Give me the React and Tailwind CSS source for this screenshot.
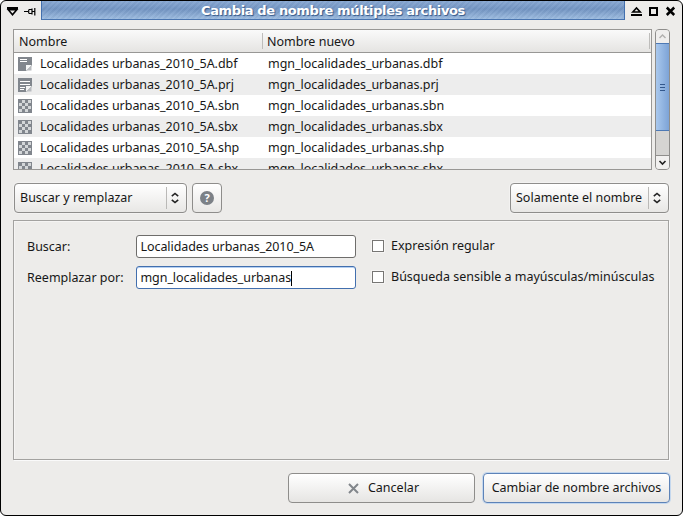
const files = [
  ['dbf', 'doc'],
  ['prj', 'lines'],
  ['sbn', 'bin'],
  ['sbx', 'bin'],
  ['shp', 'bin'],
  ['shx', 'bin'],
];

function FileIcon({ kind }) {
  if (kind === 'bin') {
    const cells = [];
    for (let r = 0; r < 4; r++)
      for (let c = 0; c < 4; c++)
        if ((r + c) % 2 === 1) cells.push(<rect key={r * 4 + c} x={1 + c * 3} y={1 + r * 3} width="3" height="3" fill="#d3d6d8" />);
    return (
      <svg width="14" height="14" shapeRendering="crispEdges" className="shrink-0">
        <rect width="14" height="14" fill="#81868d" />
        {cells}
      </svg>
    );
  }
  return (
    <svg width="14" height="14" className="shrink-0">
      <path d="M0 0H14V8.5L8.5 14H0Z" fill="#81868d" />
      {kind === 'lines' ? (
        <path d="M2 3.5H12M2 6.5H12M2 9.5H7M2 11.5H6" stroke="#fff" />
      ) : (
        <path d="M2 2.5H9M2 4.5H9" stroke="#fff" />
      )}
      <path d="M8 8H14L8 14Z" fill="#f4f5f5" />
      <path d="M13.5 8.5V13.5H8.5Z" fill="#b9bcc0" />
    </svg>
  );
}

function Combo({ label, className }) {
  return (
    <div className={`flex h-[30px] items-center rounded-[4px] border border-[#8e8d8b] bg-linear-to-b from-white to-[#e8e7e5] pl-[5px] shadow-[0_0_0_1px_#f3f2f1] ${className}`}>
      <span className="flex-1">{label}</span>
      <span className="h-[22px] w-px bg-[#bab9b7]" />
      <svg width="19" height="12" className="shrink-0">
        <path d="M4.8 4.2L8 1.5L11.2 4.2M4.8 7.8L8 10.5L11.2 7.8" fill="none" stroke="#222" strokeWidth="1.6" />
      </svg>
    </div>
  );
}

function Check({ label }) {
  return (
    <div className="-mt-px flex h-6 items-center">
      <span className="mr-[7px] size-3 border border-[#777674] bg-white shadow-[0_0_0_1px_#f5f4f3]" />
      <span>{label}</span>
    </div>
  );
}

export default function App() {
  return (
    <div className="h-[516px] w-[683px] overflow-hidden bg-white font-['Noto_Sans',sans-serif] text-[12.5px] leading-[18px] whitespace-nowrap text-[#171717]">
      <div className="flex h-[516px] w-[683px] flex-col rounded-[6px] border border-black bg-[#edecea]">
        <header className="flex h-[19px] shrink-0">
          <svg width="40" height="19" fill="none" stroke="#000">
            <path d="M6 7H17" strokeWidth="2" />
            <path d="M7.3 8.8L11.5 13.7L15.7 8.8Z" strokeWidth="1.6" />
            <path d="M23 10.5H27M27.7 8.5V12.5M28 8.5H31M28 12.5H31M31 7.5V13.5M33.8 7V14.5M31 10.5H34" strokeWidth="1.2" />
          </svg>
          <div className="w-[584px] border-x border-b border-[#426fae] border-b-[#4a75b0] bg-[repeating-linear-gradient(135deg,#ffffff0c_0_2px,#00000006_2px_4px),linear-gradient(#88a8d3,#7294c2_45%,#9dbce0)] pt-px text-center font-['DejaVu_Sans',sans-serif] text-[13px] leading-[18px] font-bold tracking-[-0.37px] text-white [text-shadow:1px_1px_1px_#335788]">
            <span>Cambia de nombre múltiples archivos</span>
          </div>
          <svg width="57" height="19" fill="none" stroke="#000" strokeWidth="2">
            <path d="M6 14H17" />
            <path d="M7.8 11L11.5 7L15.2 11Z" strokeWidth="1.6" />
            <path d="M25 7H32V14H25Z" />
            <path d="M41.8 6.5L49.2 14M49.2 6.5L41.8 14" strokeWidth="2.5" />
          </svg>
        </header>

        <main className="flex flex-col pt-[9px] pl-3">
          <div className="flex h-[141px]">
            <div className="w-[639px] overflow-hidden border border-[#989795] bg-white">
              <div className="flex h-[23px] items-center border-b border-[#989795] bg-linear-to-b from-[#fafafa] to-[#e5e4e2]">
                <span className="w-[248px] pt-px pl-[5px]">Nombre</span>
                <span className="h-4 w-px bg-[#bebdbb]" />
                <span className="flex-1 pt-px pl-1">Nombre nuevo</span>
                <span className="mr-px h-4 w-px bg-[#bebdbb]" />
              </div>
              {files.map(([ext, kind]) => (
                <div key={ext} className="flex h-[21px] items-center pl-1 tracking-[-0.03px] even:bg-white odd:bg-[#ededed]">
                  <FileIcon kind={kind} />
                  <span className="w-[236px] pl-2">Localidades urbanas_2010_5A.{ext}</span>
                  <span>mgn_localidades_urbanas.{ext}</span>
                </div>
              ))}
            </div>
            <div className="ml-[3px] flex w-[15px] flex-col overflow-hidden rounded-[4px] border border-[#8f8e8c] bg-[#d5d4d2]">
              <svg width="13" height="13" className="shrink-0 bg-[#efeeed]">
                <path d="M3.5 8L6.5 5L9.5 8" fill="none" stroke="#b1b0ae" strokeWidth="1.4" />
              </svg>
              <div className="-mx-px flex h-[88px] flex-col items-center justify-center gap-[2px] border border-[#4d79b5] bg-linear-to-r from-[#a9c8ed] to-[#7da3d6]">
                <span className="h-px w-[5px] bg-[#33578c]" />
                <span className="h-px w-[5px] bg-[#33578c]" />
                <span className="h-px w-[5px] bg-[#33578c]" />
              </div>
              <svg width="13" height="14" className="mt-auto shrink-0 border-t border-[#8f8e8c] bg-[#f1f0ef]">
                <path d="M3.5 5L6.5 8L9.5 5" fill="none" stroke="#222" strokeWidth="1.6" />
              </svg>
            </div>
          </div>

          <div className="mt-[13px] flex w-[656px] pl-px">
            <Combo label="Buscar y remplazar" className="w-[173px]" />
            <div className="ml-[5px] flex size-[30px] items-center justify-center rounded-[4px] border border-[#8e8d8b] bg-linear-to-b from-white to-[#e8e7e5]">
              <span className="size-[14px] rounded-full bg-[#7c8187] text-center text-[11px] leading-[14px] font-bold text-white">?</span>
            </div>
            <Combo label="Solamente el nombre" className="ml-auto w-[159px]" />
          </div>

          <section className="mt-[7px] grid h-[240px] w-[656px] grid-cols-[109px_236px_auto] content-start gap-y-[7px] border border-[#a3a2a0] pt-[14px] pl-[13px] shadow-[inset_1px_1px_#f5f4f3,1px_1px_#fafafa]">
            <span className="leading-6">Buscar:</span>
            <div className="h-[23px] w-[220px] rounded-[3px] border border-[#6e6d6b] bg-white pl-[3.5px] leading-[22px] tracking-[-0.07px]">
              <span>Localidades urbanas_2010_5A</span>
            </div>
            <Check label="Expresión regular" />
            <span className="leading-6">Reemplazar por:</span>
            <div className="flex h-[23px] w-[220px] items-center rounded-[3px] border border-[#426fae] bg-white pt-px pl-[3.5px] tracking-[-0.07px] shadow-[inset_0_1px_#b5d0f2]">
              <span>mgn_localidades_urbanas</span>
              <span className="h-[15px] w-px bg-black" />
            </div>
            <Check label="Búsqueda sensible a mayúsculas/minúsculas" />
          </section>

          <footer className="mt-[13px] flex w-[657px] justify-end gap-2">
            <button className="flex h-[30px] w-[187px] items-center justify-center gap-[9px] rounded-[4px] border border-[#8e8d8b] bg-linear-to-b from-white to-[#e6e5e3] pl-[4px]">
              <svg width="11" height="11">
                <path d="M1 1L10 10M10 1L1 10" stroke="#82868b" strokeWidth="2" />
              </svg>
              <span>Cancelar</span>
            </button>
            <button className="h-[30px] w-[187px] rounded-[4px] border border-[#5d83b8] bg-linear-to-b from-white to-[#e6e5e3] shadow-[0_0_0_1px_#c5d8ee]">
              <span>Cambiar de nombre archivos</span>
            </button>
          </footer>
        </main>
      </div>
    </div>
  );
}
